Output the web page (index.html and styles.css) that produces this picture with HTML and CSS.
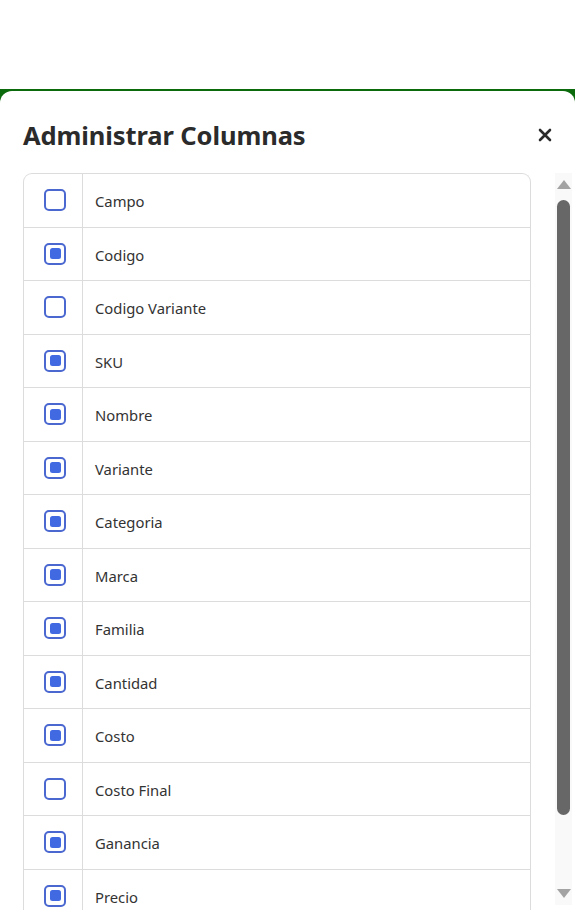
FILE: index.html
```html
<!DOCTYPE html>
<html lang="es">
<head>
<meta charset="utf-8">
<title>Administrar Columnas</title>
<link rel="stylesheet" href="styles.css">
</head>
<body>
<div class="page-top"></div>
<div class="backdrop">
  <div class="modal">
    <div class="modal-header">
      <h2 class="modal-title">Administrar Columnas</h2>
      <button class="close-btn" aria-label="Cerrar">
        <svg width="14" height="14" viewBox="0 0 14 14"><path d="M2 2 L12 12 M12 2 L2 12" stroke="#2b2b2b" stroke-width="2.6" stroke-linecap="round"/></svg>
      </button>
    </div>
    <div class="modal-body">
      <div class="col-list">
        <div class="row"><div class="cell-check"><span class="cb"></span></div><div class="cell-label">Campo</div></div>
        <div class="row"><div class="cell-check"><span class="cb checked"></span></div><div class="cell-label">Codigo</div></div>
        <div class="row"><div class="cell-check"><span class="cb"></span></div><div class="cell-label">Codigo Variante</div></div>
        <div class="row"><div class="cell-check"><span class="cb checked"></span></div><div class="cell-label">SKU</div></div>
        <div class="row"><div class="cell-check"><span class="cb checked"></span></div><div class="cell-label">Nombre</div></div>
        <div class="row"><div class="cell-check"><span class="cb checked"></span></div><div class="cell-label">Variante</div></div>
        <div class="row"><div class="cell-check"><span class="cb checked"></span></div><div class="cell-label">Categoria</div></div>
        <div class="row"><div class="cell-check"><span class="cb checked"></span></div><div class="cell-label">Marca</div></div>
        <div class="row"><div class="cell-check"><span class="cb checked"></span></div><div class="cell-label">Familia</div></div>
        <div class="row"><div class="cell-check"><span class="cb checked"></span></div><div class="cell-label">Cantidad</div></div>
        <div class="row"><div class="cell-check"><span class="cb checked"></span></div><div class="cell-label">Costo</div></div>
        <div class="row"><div class="cell-check"><span class="cb"></span></div><div class="cell-label">Costo Final</div></div>
        <div class="row"><div class="cell-check"><span class="cb checked"></span></div><div class="cell-label">Ganancia</div></div>
        <div class="row"><div class="cell-check"><span class="cb checked"></span></div><div class="cell-label">Precio</div></div>
      </div>
      <div class="scrollbar">
        <span class="arrow up"></span>
        <span class="thumb"></span>
        <span class="arrow down"></span>
      </div>
    </div>
  </div>
</div>
</body>
</html>
```

FILE: styles.css
```css
* { box-sizing: border-box; }
html, body { margin: 0; padding: 0; height: 910px; overflow: hidden; background: #fff; }
body { font-family: "Noto Sans", "Open Sans", sans-serif; color: #333; }

.page-top { height: 89px; background: #fff; }

.backdrop {
  background: #0b6a0b;
  padding-top: 2px;
  height: 821px;
}

.modal {
  background: #fff;
  border-radius: 12px 12px 0 0;
  height: 100%;
  padding: 0 3px 0 23px;
  display: flex;
  flex-direction: column;
}

.modal-header {
  display: flex;
  align-items: center;
  justify-content: space-between;
  height: 82px;
  padding: 5px 20px 0 0;
}

.modal-title {
  margin: 0;
  font-size: 25.5px;
  font-weight: 700;
  color: #2b2b2b;
  letter-spacing: -0.1px;
}

.close-btn {
  border: 0;
  background: none;
  padding: 0;
  width: 14px;
  height: 14px;
  display: flex;
}

.modal-body {
  flex: 1;
  display: flex;
  overflow: hidden;
}

.col-list {
  width: 508px;
  border: 1px solid #dcdcdc;
  border-bottom: 0;
  border-radius: 9px 9px 0 0;
  align-self: flex-start;
}

.row {
  display: flex;
  height: 53.5px;
  border-bottom: 1px solid #dcdcdc;
}

.cell-check {
  width: 59px;
  border-right: 1px solid #dcdcdc;
  display: flex;
  align-items: center;
  padding-left: 20px;
}

.cb {
  width: 22px;
  height: 22px;
  border: 2px solid #4a68d0;
  border-radius: 5px;
  display: flex;
  align-items: center;
  justify-content: center;
}

.cb.checked::after {
  content: "";
  width: 11px;
  height: 11px;
  border-radius: 2.5px;
  background: #4169e1;
}

.cell-label {
  display: flex;
  align-items: center;
  padding: 2px 0 0 12px;
  font-size: 14.8px;
  color: #333;
}

.scrollbar {
  margin-left: 24px;
  width: 17px;
  height: 732px;
  background: #f9f9f9;
  display: flex;
  flex-direction: column;
  align-items: center;
}

.arrow {
  width: 0;
  height: 0;
  border-left: 7px solid transparent;
  border-right: 7px solid transparent;
}
.arrow.up { border-bottom: 9px solid #a3a3a3; margin-top: 7px; }
.arrow.down { border-top: 9px solid #a3a3a3; margin-top: auto; margin-bottom: 7px; }

.thumb {
  margin-top: 11px;
  width: 13px;
  height: 615px;
  border-radius: 7px;
  background: #676767;
}
```
